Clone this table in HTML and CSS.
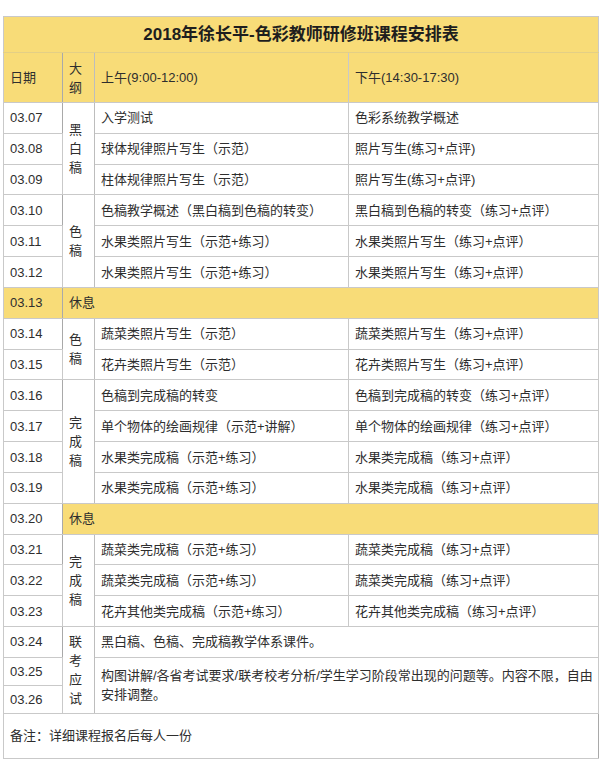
FILE: index.html
```html
<!DOCTYPE html>
<html lang="zh-CN">
<head>
<meta charset="utf-8">
<title>2018年徐长平-色彩教师研修班课程安排表</title>
<link rel="stylesheet" href="styles.css">
</head>
<body>
<div class="page">
<table class="schedule">
<colgroup><col class="c-date"><col class="c-out"><col class="c-am"><col class="c-pm"></colgroup>
<tr class="title-row"><th colspan="4">2018年徐长平-色彩教师研修班课程安排表</th></tr>
<tr class="head-row"><td>日期</td><td class="outline">大纲</td><td>上午(9:00-12:00)</td><td>下午(14:30-17:30)</td></tr>
<tr><td>03.07</td><td rowspan="3" class="outline">黑白稿</td><td>入学测试</td><td>色彩系统教学概述</td></tr>
<tr><td>03.08</td><td>球体规律照片写生（示范）</td><td>照片写生(练习+点评)</td></tr>
<tr><td>03.09</td><td>柱体规律照片写生（示范）</td><td>照片写生(练习+点评)</td></tr>
<tr><td>03.10</td><td rowspan="3" class="outline">色稿</td><td>色稿教学概述（黑白稿到色稿的转变）</td><td>黑白稿到色稿的转变（练习+点评）</td></tr>
<tr><td>03.11</td><td>水果类照片写生（示范+练习）</td><td>水果类照片写生（练习+点评）</td></tr>
<tr><td>03.12</td><td>水果类照片写生（示范+练习）</td><td>水果类照片写生（练习+点评）</td></tr>
<tr><td class="rest">03.13</td><td colspan="3" class="rest">休息</td></tr>
<tr><td>03.14</td><td rowspan="2" class="outline">色稿</td><td>蔬菜类照片写生（示范）</td><td>蔬菜类照片写生（练习+点评）</td></tr>
<tr><td>03.15</td><td>花卉类照片写生（示范）</td><td>花卉类照片写生（练习+点评）</td></tr>
<tr><td>03.16</td><td rowspan="4" class="outline">完成稿</td><td>色稿到完成稿的转变</td><td>色稿到完成稿的转变（练习+点评）</td></tr>
<tr><td>03.17</td><td>单个物体的绘画规律（示范+讲解）</td><td>单个物体的绘画规律（练习+点评）</td></tr>
<tr><td>03.18</td><td>水果类完成稿（示范+练习）</td><td>水果类完成稿（练习+点评）</td></tr>
<tr><td>03.19</td><td>水果类完成稿（示范+练习）</td><td>水果类完成稿（练习+点评）</td></tr>
<tr><td>03.20</td><td colspan="3" class="rest">休息</td></tr>
<tr><td>03.21</td><td rowspan="3" class="outline">完成稿</td><td>蔬菜类完成稿（示范+练习）</td><td>蔬菜类完成稿（练习+点评）</td></tr>
<tr><td>03.22</td><td>蔬菜类完成稿（示范+练习）</td><td>蔬菜类完成稿（练习+点评）</td></tr>
<tr><td>03.23</td><td>花卉其他类完成稿（示范+练习）</td><td>花卉其他类完成稿（练习+点评）</td></tr>
<tr><td>03.24</td><td rowspan="3" class="outline">联考应试</td><td colspan="2">黑白稿、色稿、完成稿教学体系课件。</td></tr>
<tr class="short"><td>03.25</td><td colspan="2" rowspan="2" class="multi"><span class="nowrap">构图讲解/各省考试要求/联考校考分析/学生学习阶段常出现的问题等。内容不限，自由</span><br>安排调整。</td></tr>
<tr class="short"><td>03.26</td></tr>
<tr class="note-row"><td colspan="4">备注：详细课程报名后每人一份</td></tr>
</table>
</div>
</body>
</html>
```

FILE: styles.css
```css
html, body {
  margin: 0;
  padding: 0;
  background: #ffffff;
}

.page {
  padding: 16px 2px 15px 3px;
}

.schedule {
  width: 595px;
  table-layout: fixed;
  border-collapse: collapse;
  font-family: "Liberation Sans", "Noto Sans CJK SC", sans-serif;
  font-size: 13px;
  color: #2e2e2e;
}

.c-date { width: 59px; }
.c-out { width: 32px; }
.c-am { width: 254px; }
.c-pm { width: 250px; }

.schedule td,
.schedule th {
  border: 1px solid #c9c9c9;
  padding: 0 6px;
  text-align: left;
  vertical-align: middle;
  line-height: 19px;
  white-space: normal;
}

.schedule td:first-child {
  border-right-color: #a9a9a9;
}

.schedule tr {
  height: 30.83px;
}

.title-row {
  height: 36px !important;
}

.title-row th {
  background: #f8dc78;
  text-align: center;
  font-size: 17px;
  font-weight: bold;
  color: #1e1e1e;
  border-bottom-color: #e3cf86;
}

.head-row {
  height: 50px !important;
}

.head-row td {
  background: #f8dc78;
}

.schedule td.outline {
  word-break: break-all;
  border-right-color: #bdbdbd;
}

.schedule td.rest {
  background: #f8dc78;
}

.schedule tr.short {
  height: 28px;
}

.multi {
  line-height: 20px;
}

.nowrap {
  white-space: nowrap;
}

.schedule tr.note-row {
  height: 45px;
}
```
